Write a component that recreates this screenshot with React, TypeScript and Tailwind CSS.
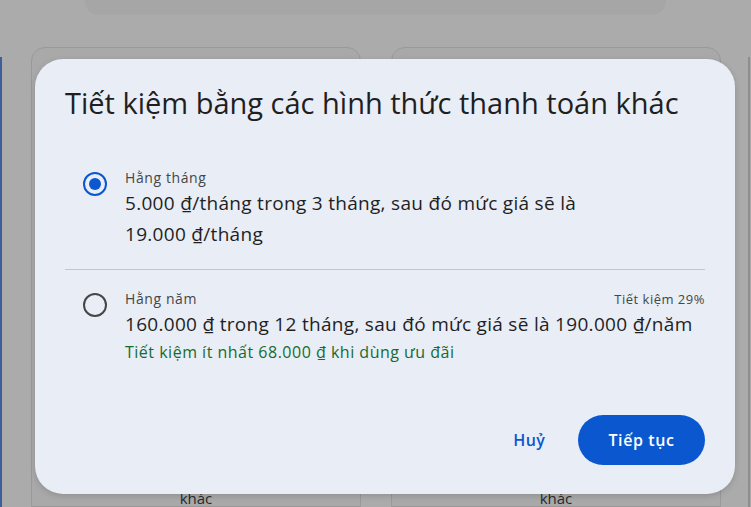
import React from "react";

export default function App() {
  const font = { fontFamily: "'Open Sans', 'Noto Sans', sans-serif" };
  return (
    <div className="relative w-[751px] h-[507px] overflow-hidden bg-[#ababab]" style={font}>
      {/* background page */}
      <div className="flex flex-col">
        <div className="mx-[85px] h-[15px] rounded-b-[14px] bg-[#a6a6a6]" />
        <div className="mt-[32px] flex gap-[30px] pl-[31px]">
          <div className="w-[330px] h-[460px] rounded-t-[14px] border border-[#999] bg-[#a9a9a9] flex flex-col justify-end items-center">
            <span className="text-[15px] text-[#2a2a2a] leading-[16px]">khác</span>
          </div>
          <div className="w-[330px] h-[460px] rounded-t-[14px] border border-[#999] bg-[#a9a9a9] flex flex-col justify-end items-center">
            <span className="text-[15px] text-[#2a2a2a] leading-[16px]">khác</span>
          </div>
        </div>
      </div>
      <div className="absolute left-0 top-[57px] bottom-0 w-[2px] bg-[#3f5f9a]" />
      <div className="absolute right-[1px] top-[57px] bottom-0 w-[2px] bg-[#8e8e8e]" />

      {/* dialog */}
      <div className="absolute left-[35px] top-[59px] w-[700px] h-[435px] rounded-[28px] bg-[#e9edf6] shadow-[0_2px_6px_rgba(0,0,0,0.15)] flex flex-col px-[30px] pt-[24px]">
        <h1 className="text-[29px] leading-[40px] text-[#1f1f1f] font-normal">
          Tiết kiệm bằng các hình thức thanh toán khác
        </h1>

        <div className="mt-[45px] flex gap-[18px] pb-[19px] border-b border-[#c4c7c5]">
          <div className="pt-[4px] pl-[18px]">
            <div className="w-[24px] h-[24px] rounded-full border-[2px] border-[#0b57d0] flex items-center justify-center">
              <div className="w-[12px] h-[12px] rounded-full bg-[#0b57d0]" />
            </div>
          </div>
          <div className="flex flex-col flex-1">
            <div className="text-[14px] leading-[20px] tracking-[0.6px] text-[#444746]">Hằng tháng</div>
            <div className="text-[19px] leading-[31px] tracking-[0.3px] text-[#1f1f1f]">
              5.000 ₫/tháng trong 3 tháng, sau đó mức giá sẽ là
              <br />
              19.000 ₫/tháng
            </div>
          </div>
        </div>

        <div className="mt-[19px] flex gap-[18px]">
          <div className="pt-[4px] pl-[18px]">
            <div className="w-[24px] h-[24px] rounded-full border-[2px] border-[#444746]" />
          </div>
          <div className="flex flex-col flex-1">
            <div className="flex justify-between items-center">
              <span className="text-[14px] leading-[20px] tracking-[0.6px] text-[#444746]">Hằng năm</span>
              <span className="text-[13px] leading-[20px] tracking-[0.5px] text-[#444746]">Tiết kiệm 29%</span>
            </div>
            <div className="text-[19px] leading-[31px] tracking-[0.3px] text-[#1f1f1f]">
              160.000 ₫ trong 12 tháng, sau đó mức giá sẽ là 190.000 ₫/năm
            </div>
            <div className="text-[16px] leading-[25px] tracking-[0.5px] text-[#146c2e]">
              Tiết kiệm ít nhất 68.000 ₫ khi dùng ưu đãi
            </div>
          </div>
        </div>

        <div className="mt-auto mb-[29px] flex justify-end items-center gap-[12px]">
          <button className="h-[50px] px-[21px] rounded-full text-[16px] font-semibold tracking-[0.3px] text-[#0b57d0]">Huỷ</button>
          <button className="h-[50px] w-[127px] rounded-full bg-[#0b57d0] text-[16px] font-semibold tracking-[0.6px] text-white">Tiếp tục</button>
        </div>
      </div>
    </div>
  );
}
